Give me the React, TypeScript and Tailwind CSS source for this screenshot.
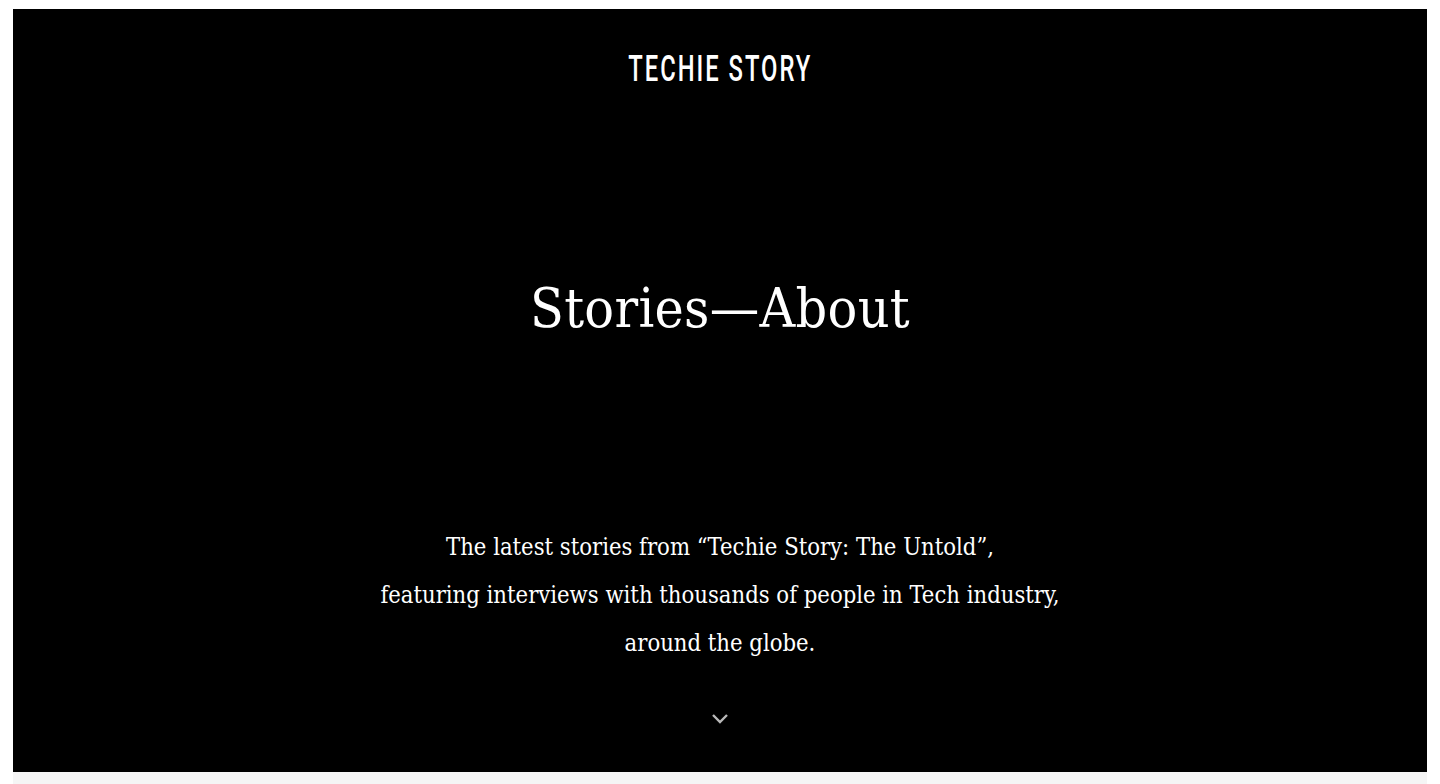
export default function App() {
  return (
    <div className="min-h-screen bg-white pl-[13px] pr-[13px] pt-[9px]">
      <section className="h-[763px] bg-black flex flex-col items-center text-white">
        <div
          className="mt-[40px] text-[36px] leading-[40px] tracking-[3px] font-medium scale-x-[0.66] text-white"
          style={{ fontFamily: 'Roboto, "DejaVu Sans", sans-serif' }}
        >
          TECHIE STORY
        </div>
        <h1
          className="mt-[184px] text-[55px] leading-[70px] tracking-[0.3px] font-normal font-stretch-condensed"
          style={{ fontFamily: '"DejaVu Serif", serif' }}
        >
          Stories—About
        </h1>
        <div
          className="mt-[180px] text-center text-[23.6px] leading-[48px] font-stretch-condensed"
          style={{ fontFamily: '"DejaVu Serif", serif' }}
        >
          <p>The latest stories from “Techie Story: The Untold”,</p>
          <p>featuring interviews with thousands of people in Tech industry,</p>
          <p>around the globe.</p>
        </div>
        <svg className="mt-[45px]" width="18" height="12" viewBox="0 0 18 12" fill="none">
          <path d="M2 3l7 7 7-7" stroke="#b8b8b8" strokeWidth="2.4" />
        </svg>
      </section>
      <div className="h-[40px] bg-[#f5f5f5]" />
    </div>
  );
}
